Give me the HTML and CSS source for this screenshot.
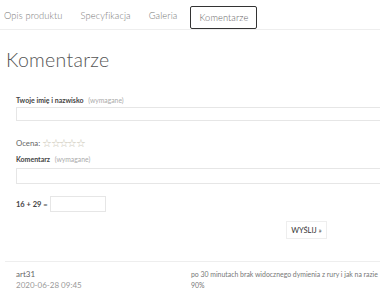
FILE: index.html
```html
<!DOCTYPE html>
<html lang="pl">
<head>
  <meta charset="UTF-8" />
  <title>Komentarze</title>
  <link rel="stylesheet" href="styles.css">
</head>
<body>
  <ul class="tabs">
    <li>Opis produktu</li>
    <li>Specyfikacja</li>
    <li>Galeria</li>
    <li class="active">Komentarze</li>
  </ul>

  <h2 class="title">Komentarze</h2>

  <form class="comment-form">
    <label class="field-label">Twoje imię i nazwisko <span class="req">(wymagane)</span></label>
    <input type="text" class="field" />

    <div class="rating">Ocena: <span class="stars">☆☆☆☆☆</span></div>

    <label class="field-label">Komentarz <span class="req">(wymagane)</span></label>
    <input type="text" class="field field-tall" />

    <div class="captcha">
      <span>16 + 29 =</span>
      <input type="text" class="captcha-input" />
    </div>

    <div class="submit-row">
      <button type="button" class="submit-btn">WYŚLIJ »</button>
    </div>
  </form>

  <div class="comment">
    <div class="comment-meta">
      <div class="author">art31</div>
      <div class="date">2020-06-28 09:45</div>
    </div>
    <div class="comment-text">po 30 minutach brak widocznego dymienia z rury i jak na razie 90%</div>
  </div>
</body>
</html>
```

FILE: styles.css
```css
body {
  margin: 0;
  font-family: Lato, 'Open Sans', sans-serif;
  background: #fff;
  color: #555;
  overflow: hidden;
}

.tabs {
  list-style: none;
  margin: 0;
  padding: 6px 0 0 4px;
  display: flex;
  border-bottom: 1px solid #eee;
  height: 23px;
  box-sizing: content-box;
}

.tabs li {
  font-size: 9.3px;
  font-weight: 300;
  letter-spacing: 0.1px;
  color: #777;
  padding: 4px 0 0;
  margin-right: 18px;
}

.tabs li.active {
  border: 1px solid #333;
  border-radius: 2px;
  padding: 5px 8px 0;
  height: 16px;
  margin-left: -5px;
  width: 49px;
  color: #666;
}

.title {
  font-size: 19.5px;
  font-weight: 300;
  letter-spacing: 0.3px;
  color: #555;
  margin: 19px 0 0 6px;
  line-height: 22px;
}

.comment-form {
  padding: 24px 0 0 16px;
}

.field-label {
  display: block;
  font-size: 7px;
  font-weight: 700;
  color: #444;
  line-height: 10px;
}

.req {
  font-weight: 400;
  color: #aaa;
  font-size: 6.8px;
  margin-left: 3px;
}

.field {
  display: block;
  width: 380px;
  height: 14px;
  border: 1px solid #e6e6e6;
  box-sizing: border-box;
  margin: 2px 0 0;
}

.field-tall {
  height: 16px;
  margin-top: 4px;
}

.rating {
  display: flex;
  align-items: center;
  font-size: 7.8px;
  color: #666;
  margin-top: 17px;
  line-height: 10px;
}

.stars {
  color: #c8c2b0;
  font-size: 11px;
  letter-spacing: -1.6px;
  margin-left: 2px;
}

.rating + .field-label {
  margin-top: 6px;
}

.captcha {
  display: flex;
  align-items: center;
  margin-top: 12px;
  font-size: 7.5px;
  font-weight: 700;
  color: #444;
}

.captcha-input {
  width: 56px;
  height: 16px;
  border: 1px solid #e6e6e6;
  box-sizing: border-box;
  margin-left: 2px;
}

.submit-row {
  display: flex;
  padding: 9px 0 0 270px;
}

.submit-btn {
  font-family: Lato, sans-serif;
  font-size: 7.5px;
  color: #333;
  background: #fff;
  border: 1px solid #eee;
  height: 18px;
  width: 41px;
  padding: 0;
}

.comment {
  margin: 22px 0 0 5px;
  border-top: 1px solid #eee;
  display: flex;
  padding-top: 7px;
  font-size: 6.9px;
  line-height: 11px;
}

.comment-meta {
  flex: none;
  width: 186px;
  padding-left: 11px;
  box-sizing: border-box;
  font-size: 8px;
}

.author {
  color: #666;
}

.date {
  color: #999;
}

.comment-text {
  color: #777;
  width: 196px;
  flex: none;
}
```
